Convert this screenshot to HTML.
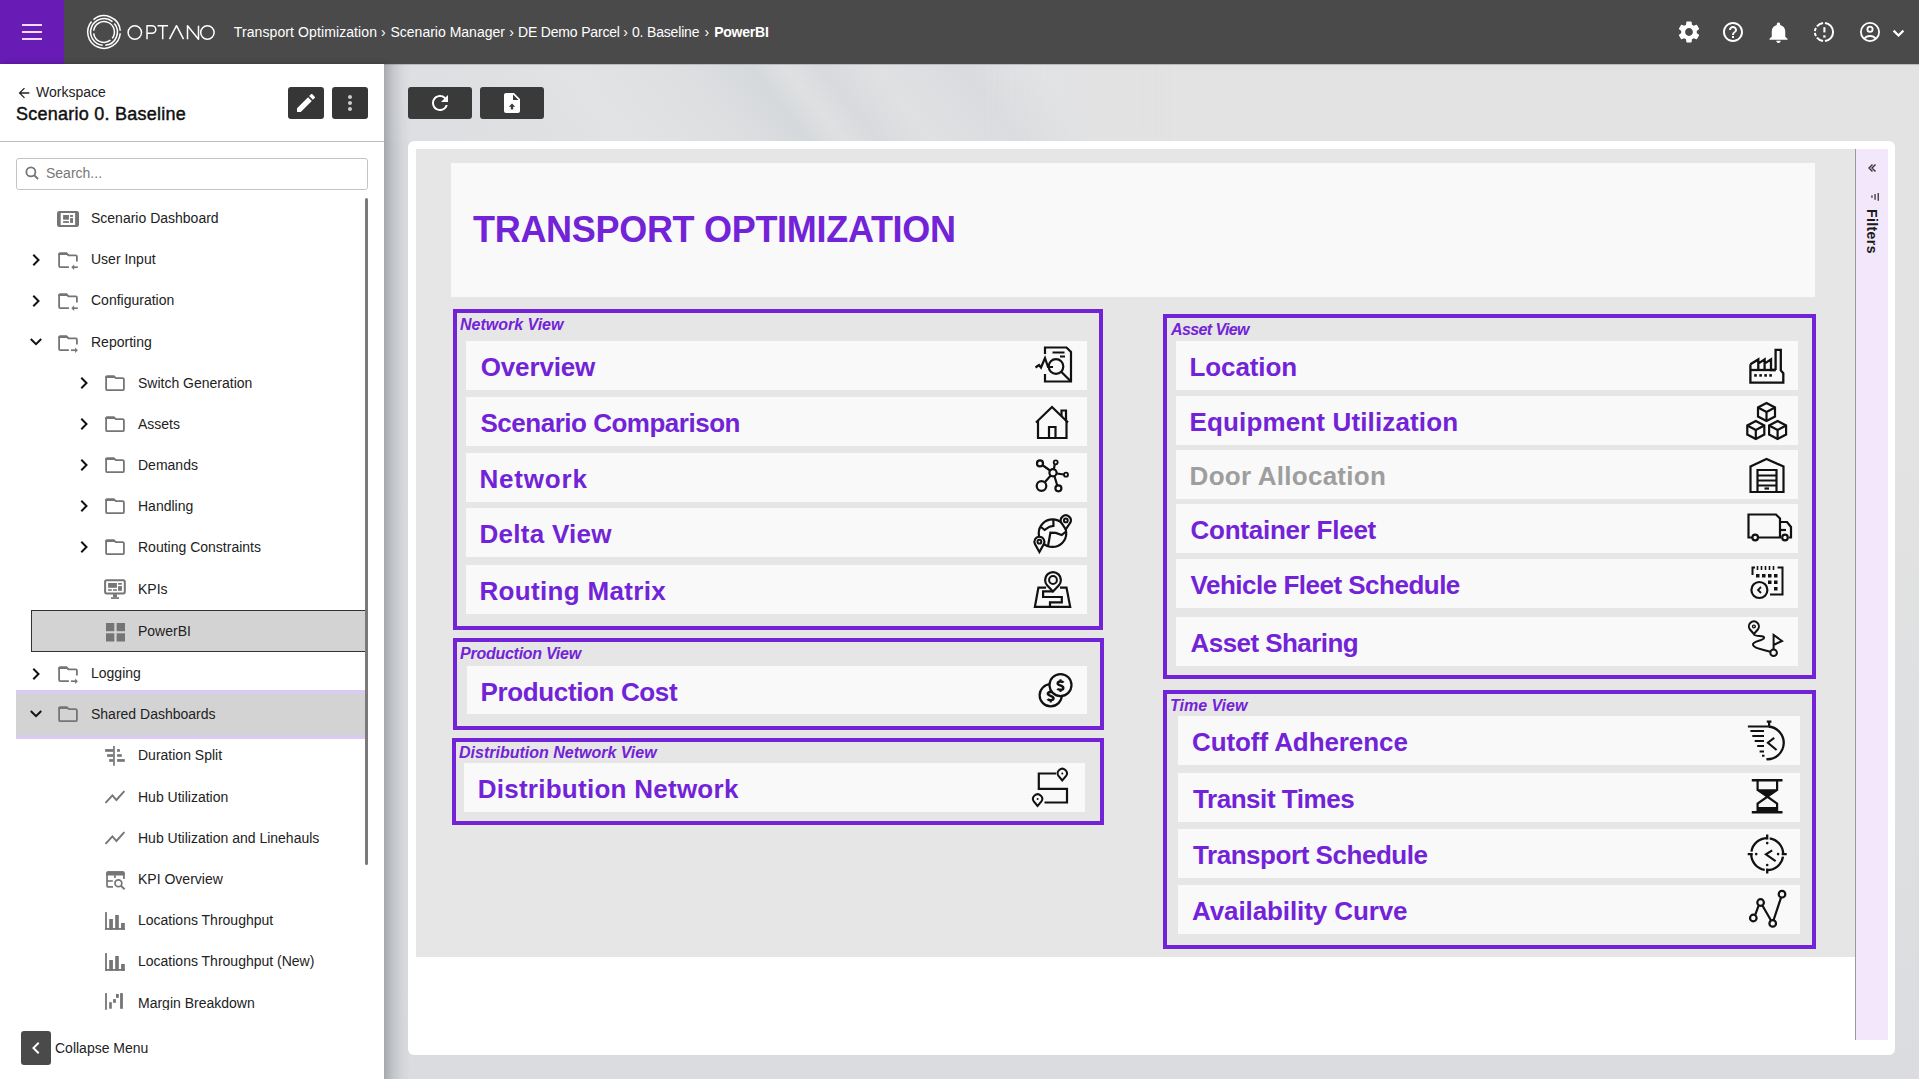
<!DOCTYPE html><html><head><meta charset="utf-8"><style>
*{margin:0;padding:0;box-sizing:border-box}
html,body{width:1919px;height:1079px;overflow:hidden;font-family:"Liberation Sans",sans-serif;background:#dfe0e2}
.abs{position:absolute}
.top{left:0;top:0;width:1919px;height:64px;background:#4a4a4a}
.ham{left:0;top:0;width:64px;height:64px;background:#691bb5}
.ham i{position:absolute;left:22px;width:20px;height:2px;background:#f3dcff}
.bc{left:233px;top:23px;color:#fff;font-size:14px;line-height:18px;white-space:nowrap;letter-spacing:0px}
.bc b{font-weight:bold}
.bc .sep{padding:0 4px}
.side{left:0;top:64px;width:384px;height:1015px;background:#fff;box-shadow:2px 0 6px rgba(0,0,0,.25)}
.tx{position:absolute;font-size:14px;line-height:16px;color:#222;white-space:nowrap}
.btnd{position:absolute;background:#363636;border-radius:3px}
.main{left:384px;top:64px;width:1535px;height:1015px;overflow:hidden;
 background:linear-gradient(to bottom,rgba(218,220,223,0) 0,rgba(218,220,223,0) 35%,#dadcdf 100%),linear-gradient(to right,#dadcdf 0,#e0e1e3 600px,#e3e3e3 800px)}
.streak{left:384px;top:64px;width:790px;height:77px;
 background:linear-gradient(52deg,rgba(220,222,225,1) 0px,#e0e1e3 150px,#e2e3e5 190px,#dfe0e2 260px,#d6d9dc 335px,#dfe0e2 362px,#d8dadd 390px,#e0e1e3 432px,#d9dbde 501px,#e2e3e4 560px,#e3e3e3 650px);-webkit-mask-image:linear-gradient(to right,#000 0,#000 600px,transparent 790px)}
.card{left:408px;top:141px;width:1487px;height:914px;background:#fff;border-radius:6px}
.canvas{left:416px;top:149px;width:1439px;height:808px;background:#e6e6e6}
.pane{left:1855px;top:149px;width:33px;height:891px;background:#f3e8fb;border-left:1px solid #9a9a9a}
.tbox{left:451px;top:163px;width:1364px;height:134px;background:#f9f9f9}
.title{left:473px;top:209px;font-size:36px;line-height:42px;font-weight:bold;color:#7323d7;white-space:nowrap;letter-spacing:-0.3px}
.grp{position:absolute;border:4px solid #7323d7}
.lbl{position:absolute;font-size:16px;line-height:18px;font-weight:bold;font-style:italic;color:#7323d7;white-space:nowrap}
.it{position:absolute;background:#f9f9f9}
.it span{position:absolute;font-size:26px;line-height:30px;font-weight:bold;color:#7323d7;white-space:nowrap}
.it svg{position:absolute}
</style></head><body>
<div class="abs top"></div>
<div class="abs ham"><i style="top:24px"></i><i style="top:31px"></i><i style="top:38px"></i></div>
<svg class="abs" style="left:84px;top:12px" width="40" height="40" viewBox="0 0 40 40" fill="none" stroke="#fff" stroke-width="1.5">
<path d="M36.25 18.70A16.3 16.3 0 0 0 9.43 7.59"/>
<path d="M7.59 9.43A16.3 16.3 0 1 0 36.25 21.30"/>
<path d="M28.51 9.65A13.4 13.4 0 1 0 18.70 33.34"/>
<path d="M21.30 33.34A13.4 13.4 0 0 0 30.35 11.49"/>
<path d="M9.68 21.30A10.4 10.4 0 0 0 26.38 28.21"/>
<path d="M28.21 26.38A10.4 10.4 0 1 0 9.68 18.70"/>
</svg>
<svg class="abs" style="left:127px;top:23px" width="90" height="18" viewBox="0 0 90 18" fill="none" stroke="#fff" stroke-width="1.5" stroke-linejoin="round">
<ellipse cx="7.8" cy="9.45" rx="6.7" ry="6.75"/>
<path d="M20 16.2V2.7H25A3.8 3.8 0 0 1 25 10.3H20"/>
<path d="M30.5 2.7H41M35.7 2.7V16.2"/>
<path d="M42.5 16.2L49.5 2.7L56.5 16.2"/>
<path d="M60.5 16.2V2.7L71.5 16.2V2.7"/>
<ellipse cx="80.4" cy="9.45" rx="6.7" ry="6.75"/>
</svg>
<div class="abs bc" style="left:233.8px;letter-spacing:0.1px">Transport Optimization</div>
<div class="abs bc" style="left:381px;letter-spacing:0px">›</div>
<div class="abs bc" style="left:390.5px;letter-spacing:0px">Scenario Manager</div>
<div class="abs bc" style="left:509.2px;letter-spacing:0px">›</div>
<div class="abs bc" style="left:518px;letter-spacing:-0.18px">DE Demo Parcel</div>
<div class="abs bc" style="left:623.3px;letter-spacing:0px">›</div>
<div class="abs bc" style="left:632px;letter-spacing:-0.18px">0. Baseline</div>
<div class="abs bc" style="left:704.6px;letter-spacing:0px">›</div>
<div class="abs bc" style="left:714.2px;letter-spacing:-0.23px"><b>PowerBI</b></div>
<svg class="abs" style="left:1676px;top:19px" width="26" height="26" viewBox="0 0 24 24" fill="#fff"><path d="M19.14 12.94c.04-.3.06-.61.06-.94 0-.32-.02-.64-.07-.94l2.03-1.58a.49.49 0 0 0 .12-.61l-1.92-3.32a.488.488 0 0 0-.59-.22l-2.39.96c-.5-.38-1.03-.7-1.62-.94l-.36-2.54a.484.484 0 0 0-.48-.41h-3.84c-.24 0-.43.17-.47.41l-.36 2.54c-.59.24-1.13.57-1.62.94l-2.39-.96c-.22-.08-.47 0-.59.22L2.74 8.87c-.12.21-.08.47.12.61l2.03 1.58c-.05.3-.09.63-.09.94s.02.64.07.94l-2.03 1.58a.49.49 0 0 0-.12.61l1.92 3.32c.12.22.37.29.59.22l2.39-.96c.5.38 1.03.7 1.62.94l.36 2.54c.05.24.24.41.48.41h3.84c.24 0 .44-.17.47-.41l.36-2.54c.59-.24 1.13-.56 1.62-.94l2.39.96c.22.08.47 0 .59-.22l1.92-3.32c.12-.22.07-.47-.12-.61l-2.01-1.58zM12 15.6c-1.98 0-3.6-1.62-3.6-3.6s1.62-3.6 3.6-3.6 3.6 1.62 3.6 3.6-1.62 3.6-3.6 3.6z"/></svg>
<svg class="abs" style="left:1721px;top:20px" width="24" height="24" viewBox="0 0 24 24" fill="#fff"><path d="M11 18h2v-2h-2v2zm1-16C6.48 2 2 6.48 2 12s4.48 10 10 10 10-4.48 10-10S17.52 2 12 2zm0 18c-4.41 0-8-3.59-8-8s3.59-8 8-8 8 3.59 8 8-3.59 8-8 8zm0-14c-2.21 0-4 1.79-4 4h2c0-1.1.9-2 2-2s2 .9 2 2c0 2-3 1.75-3 5h2c0-2.25 3-2.5 3-5 0-2.21-1.79-4-4-4z"/></svg>
<svg class="abs" style="left:1764.5px;top:19.5px" width="27" height="25" viewBox="0 0 24 24" preserveAspectRatio="none" fill="#fff"><path d="M12 22c1.1 0 2-.9 2-2h-4c0 1.1.89 2 2 2zm6-6v-5c0-3.07-1.64-5.64-4.5-6.32V4c0-.83-.67-1.5-1.5-1.5s-1.5.67-1.5 1.5v.68C7.63 5.36 6 7.92 6 11v5l-2 2v1h16v-1l-2-2z"/></svg>
<svg class="abs" style="left:1812px;top:20px" width="24" height="24" viewBox="0 0 24 24" fill="none" stroke="#fff" stroke-width="2"><path d="M12.95 21.05A9.1 9.1 0 0 0 12.95 2.95 M11.05 2.95A9.1 9.1 0 0 0 4.93 6.27 M3.89 7.87A9.1 9.1 0 0 0 2.95 11.05 M2.95 12.95A9.1 9.1 0 0 0 3.89 16.13 M4.93 17.73A9.1 9.1 0 0 0 11.05 21.05"/><path d="M12.4 7.2V12.4" stroke-width="2.1"/><rect x="11.25" y="15.3" width="2.3" height="2.3" fill="#fff" stroke="none"/></svg>
<svg class="abs" style="left:1858px;top:20px" width="24" height="24" viewBox="0 0 24 24" fill="none" stroke="#fff" stroke-width="1.8"><circle cx="12" cy="12" r="9.1"/><circle cx="12" cy="9.3" r="2.6"/><path d="M6.3 18.6c1.2-1.6 3.3-2.6 5.7-2.6s4.5 1 5.7 2.6"/></svg>
<svg class="abs" style="left:1891px;top:27px" width="14" height="12" viewBox="0 0 14 12" fill="none" stroke="#fff" stroke-width="2.2"><path d="M2.6 3.6l4.9 4.9 4.9-4.9"/></svg>
<div class="abs side"></div>
<svg class="abs" style="left:16px;top:85px" width="16" height="16" viewBox="0 0 24 24" fill="#222"><path d="M20 11H7.83l5.59-5.59L12 4l-8 8 8 8 1.41-1.41L7.83 13H20v-2z"/></svg>
<div class="tx" style="left:36px;top:84px;font-size:14px">Workspace</div>
<div class="tx" style="left:16px;top:104px;font-size:18px;line-height:20px;font-weight:normal;color:#111;letter-spacing:0.25px;-webkit-text-stroke:0.45px #111">Scenario 0. Baseline</div>
<div class="btnd" style="left:288px;top:87px;width:36px;height:32px"></div>
<svg class="abs" style="left:294px;top:91px" width="24" height="24" viewBox="0 0 24 24" fill="#fff"><path d="M3 17.25V21h3.75L17.81 9.94l-3.75-3.75L3 17.25zM20.71 7.04a1 1 0 0 0 0-1.41l-2.34-2.34a1 1 0 0 0-1.41 0l-1.83 1.83 3.75 3.75 1.83-1.83z"/></svg>
<div class="btnd" style="left:332px;top:87px;width:36px;height:32px"></div>
<svg class="abs" style="left:338px;top:91px" width="24" height="24" viewBox="0 0 24 24" fill="#cdcdcd"><path d="M12 8c1.1 0 2-.9 2-2s-.9-2-2-2-2 .9-2 2 .9 2 2 2zm0 2c-1.1 0-2 .9-2 2s.9 2 2 2 2-.9 2-2-.9-2-2-2zm0 6c-1.1 0-2 .9-2 2s.9 2 2 2 2-.9 2-2-.9-2-2-2z"/></svg>
<div class="abs" style="left:0;top:141px;width:384px;height:1px;background:#bdbdbd"></div>
<div class="abs" style="left:16px;top:158px;width:352px;height:32px;border:1px solid #c4c4c4;border-radius:3px"></div>
<svg class="abs" style="left:23px;top:164px" width="18" height="18" viewBox="0 0 24 24" fill="none" stroke="#757575" stroke-width="2.4"><circle cx="10.5" cy="10.5" r="6"/><path d="M15 15l5 5"/></svg>
<div class="tx" style="left:46px;top:165px;color:#777">Search...</div>
<div class="abs" style="left:31px;top:610px;width:337px;height:42px;background:#d3d3d3;border:1px solid #333"></div>
<div class="abs" style="left:16px;top:690px;width:352px;height:49px;background:#d3d3d3;border-top:4px solid #dccbf0;border-bottom:4px solid #dccbf0"></div>
<div class="abs" style="left:0;top:198px;width:384px;height:812px;overflow:hidden">
<div class="abs" style="left:57px;top:13px;line-height:0"><svg width="22" height="16" viewBox="0 0 22 16"><rect x="0" y="0" width="22" height="16" rx="2.2" fill="#757575"/><rect x="3.7" y="2" width="14.4" height="12" fill="#fff"/><rect x="6.1" y="4" width="5.8" height="4.7" fill="#757575"/><rect x="6.1" y="10.1" width="5.8" height="1.8" fill="#757575"/><rect x="13.1" y="4" width="2.9" height="1.9" fill="#757575"/><rect x="13.1" y="7.1" width="2.9" height="4.8" fill="#757575"/></svg></div>
<div class="tx" style="left:91px;top:12px">Scenario Dashboard</div>
<div class="abs" style="left:31px;top:55px;line-height:0"><svg width="10" height="14" viewBox="0 0 10 14" fill="none" stroke="#111" stroke-width="2"><path d="M2.3 1.8L7.5 7L2.3 12.2"/></svg></div>
<div class="abs" style="left:57px;top:53px;line-height:0"><svg width="23" height="20" viewBox="0 0 23 20"><path d="M11.9 16.2H3.2A1.1 1.1 0 0 1 2.1 15.1V3.6A1.1 1.1 0 0 1 3.2 2.5H9.6L11.4 4.3H18.8A1.1 1.1 0 0 1 19.9 5.4V10.6" fill="none" stroke="#757575" stroke-width="1.8"/><path d="M1.2 3.2A1.6 1.6 0 0 1 2.8 1.6H9.9L12.2 4H1.2Z" fill="#757575"/><path d="M16.3 16.2H20.8" stroke="#757575" stroke-width="1.7"/><path d="M14.3 16.2L17.1 13.5V18.9Z" fill="#757575"/></svg></div>
<div class="tx" style="left:91px;top:53px">User Input</div>
<div class="abs" style="left:31px;top:96px;line-height:0"><svg width="10" height="14" viewBox="0 0 10 14" fill="none" stroke="#111" stroke-width="2"><path d="M2.3 1.8L7.5 7L2.3 12.2"/></svg></div>
<div class="abs" style="left:57px;top:94px;line-height:0"><svg width="23" height="20" viewBox="0 0 23 20"><path d="M11.9 16.2H3.2A1.1 1.1 0 0 1 2.1 15.1V3.6A1.1 1.1 0 0 1 3.2 2.5H9.6L11.4 4.3H18.8A1.1 1.1 0 0 1 19.9 5.4V10.6" fill="none" stroke="#757575" stroke-width="1.8"/><path d="M1.2 3.2A1.6 1.6 0 0 1 2.8 1.6H9.9L12.2 4H1.2Z" fill="#757575"/><path d="M16.3 16.2H20.8" stroke="#757575" stroke-width="1.7"/><path d="M14.3 16.2L17.1 13.5V18.9Z" fill="#757575"/></svg></div>
<div class="tx" style="left:91px;top:94px">Configuration</div>
<div class="abs" style="left:29px;top:139px;line-height:0"><svg width="14" height="10" viewBox="0 0 14 10" fill="none" stroke="#111" stroke-width="2"><path d="M1.8 2L7 7.2L12.2 2"/></svg></div>
<div class="abs" style="left:57px;top:136px;line-height:0"><svg width="23" height="20" viewBox="0 0 23 20"><path d="M11.9 16.2H3.2A1.1 1.1 0 0 1 2.1 15.1V3.6A1.1 1.1 0 0 1 3.2 2.5H9.6L11.4 4.3H18.8A1.1 1.1 0 0 1 19.9 5.4V10.6" fill="none" stroke="#757575" stroke-width="1.8"/><path d="M1.2 3.2A1.6 1.6 0 0 1 2.8 1.6H9.9L12.2 4H1.2Z" fill="#757575"/><path d="M13.9 16.2H18.5" stroke="#757575" stroke-width="1.7"/><path d="M20.9 16.2L18.1 13.5V18.9Z" fill="#757575"/></svg></div>
<div class="tx" style="left:91px;top:136px">Reporting</div>
<div class="abs" style="left:78.5px;top:178px;line-height:0"><svg width="10" height="14" viewBox="0 0 10 14" fill="none" stroke="#111" stroke-width="2"><path d="M2.3 1.8L7.5 7L2.3 12.2"/></svg></div>
<div class="abs" style="left:104px;top:176px;line-height:0"><svg width="22" height="20" viewBox="0 0 22 20"><path d="M2.1 3.4A1.1 1.1 0 0 1 3.2 2.3H9.9L11.8 4.1H18.6A1.3 1.3 0 0 1 19.9 5.4V14.9A1.3 1.3 0 0 1 18.6 16.2H3.4A1.3 1.3 0 0 1 2.1 14.9Z" fill="none" stroke="#757575" stroke-width="1.8"/><path d="M1.2 3A1.6 1.6 0 0 1 2.8 1.4H10.1L12.6 4H1.2Z" fill="#757575"/></svg></div>
<div class="tx" style="left:138px;top:177px">Switch Generation</div>
<div class="abs" style="left:78.5px;top:219px;line-height:0"><svg width="10" height="14" viewBox="0 0 10 14" fill="none" stroke="#111" stroke-width="2"><path d="M2.3 1.8L7.5 7L2.3 12.2"/></svg></div>
<div class="abs" style="left:104px;top:217px;line-height:0"><svg width="22" height="20" viewBox="0 0 22 20"><path d="M2.1 3.4A1.1 1.1 0 0 1 3.2 2.3H9.9L11.8 4.1H18.6A1.3 1.3 0 0 1 19.9 5.4V14.9A1.3 1.3 0 0 1 18.6 16.2H3.4A1.3 1.3 0 0 1 2.1 14.9Z" fill="none" stroke="#757575" stroke-width="1.8"/><path d="M1.2 3A1.6 1.6 0 0 1 2.8 1.4H10.1L12.6 4H1.2Z" fill="#757575"/></svg></div>
<div class="tx" style="left:138px;top:218px">Assets</div>
<div class="abs" style="left:78.5px;top:260px;line-height:0"><svg width="10" height="14" viewBox="0 0 10 14" fill="none" stroke="#111" stroke-width="2"><path d="M2.3 1.8L7.5 7L2.3 12.2"/></svg></div>
<div class="abs" style="left:104px;top:258px;line-height:0"><svg width="22" height="20" viewBox="0 0 22 20"><path d="M2.1 3.4A1.1 1.1 0 0 1 3.2 2.3H9.9L11.8 4.1H18.6A1.3 1.3 0 0 1 19.9 5.4V14.9A1.3 1.3 0 0 1 18.6 16.2H3.4A1.3 1.3 0 0 1 2.1 14.9Z" fill="none" stroke="#757575" stroke-width="1.8"/><path d="M1.2 3A1.6 1.6 0 0 1 2.8 1.4H10.1L12.6 4H1.2Z" fill="#757575"/></svg></div>
<div class="tx" style="left:138px;top:259px">Demands</div>
<div class="abs" style="left:78.5px;top:301px;line-height:0"><svg width="10" height="14" viewBox="0 0 10 14" fill="none" stroke="#111" stroke-width="2"><path d="M2.3 1.8L7.5 7L2.3 12.2"/></svg></div>
<div class="abs" style="left:104px;top:299px;line-height:0"><svg width="22" height="20" viewBox="0 0 22 20"><path d="M2.1 3.4A1.1 1.1 0 0 1 3.2 2.3H9.9L11.8 4.1H18.6A1.3 1.3 0 0 1 19.9 5.4V14.9A1.3 1.3 0 0 1 18.6 16.2H3.4A1.3 1.3 0 0 1 2.1 14.9Z" fill="none" stroke="#757575" stroke-width="1.8"/><path d="M1.2 3A1.6 1.6 0 0 1 2.8 1.4H10.1L12.6 4H1.2Z" fill="#757575"/></svg></div>
<div class="tx" style="left:138px;top:300px">Handling</div>
<div class="abs" style="left:78.5px;top:342px;line-height:0"><svg width="10" height="14" viewBox="0 0 10 14" fill="none" stroke="#111" stroke-width="2"><path d="M2.3 1.8L7.5 7L2.3 12.2"/></svg></div>
<div class="abs" style="left:104px;top:340px;line-height:0"><svg width="22" height="20" viewBox="0 0 22 20"><path d="M2.1 3.4A1.1 1.1 0 0 1 3.2 2.3H9.9L11.8 4.1H18.6A1.3 1.3 0 0 1 19.9 5.4V14.9A1.3 1.3 0 0 1 18.6 16.2H3.4A1.3 1.3 0 0 1 2.1 14.9Z" fill="none" stroke="#757575" stroke-width="1.8"/><path d="M1.2 3A1.6 1.6 0 0 1 2.8 1.4H10.1L12.6 4H1.2Z" fill="#757575"/></svg></div>
<div class="tx" style="left:138px;top:341px">Routing Constraints</div>
<div class="abs" style="left:102px;top:379px;line-height:0"><svg width="26" height="24" viewBox="0 0 26 24" fill="#757575"><rect x="3.1" y="3.2" width="19.7" height="13.2" rx="1.6" fill="none" stroke="#757575" stroke-width="2"/><rect x="6.1" y="6" width="8.8" height="4.8"/><rect x="6.1" y="12.2" width="3.65" height="1.6"/><rect x="11.1" y="12.2" width="3.8" height="1.6"/><rect x="16.1" y="6" width="3.8" height="1.7"/><rect x="16.1" y="9.1" width="3.8" height="4.7"/><rect x="11.1" y="17.2" width="3.8" height="3"/><rect x="9" y="20.2" width="8" height="1.7"/></svg></div>
<div class="tx" style="left:138px;top:383px">KPIs</div>
<div class="abs" style="left:106px;top:424.5px;line-height:0"><svg width="20" height="20" viewBox="0 0 20 20" fill="#757575"><rect x="0" y="0" width="8.3" height="8.2"/><rect x="10.6" y="0" width="8.4" height="8.2"/><rect x="0" y="10.3" width="8.3" height="8.2"/><rect x="10.6" y="10.3" width="8.4" height="8.2"/></svg></div>
<div class="tx" style="left:138px;top:425px">PowerBI</div>
<div class="abs" style="left:31px;top:469px;line-height:0"><svg width="10" height="14" viewBox="0 0 10 14" fill="none" stroke="#111" stroke-width="2"><path d="M2.3 1.8L7.5 7L2.3 12.2"/></svg></div>
<div class="abs" style="left:57px;top:467px;line-height:0"><svg width="23" height="20" viewBox="0 0 23 20"><path d="M11.9 16.2H3.2A1.1 1.1 0 0 1 2.1 15.1V3.6A1.1 1.1 0 0 1 3.2 2.5H9.6L11.4 4.3H18.8A1.1 1.1 0 0 1 19.9 5.4V10.6" fill="none" stroke="#757575" stroke-width="1.8"/><path d="M1.2 3.2A1.6 1.6 0 0 1 2.8 1.6H9.9L12.2 4H1.2Z" fill="#757575"/><path d="M13.9 16.2H18.5" stroke="#757575" stroke-width="1.7"/><path d="M20.9 16.2L18.1 13.5V18.9Z" fill="#757575"/></svg></div>
<div class="tx" style="left:91px;top:467px">Logging</div>
<div class="abs" style="left:29px;top:511px;line-height:0"><svg width="14" height="10" viewBox="0 0 14 10" fill="none" stroke="#111" stroke-width="2"><path d="M1.8 2L7 7.2L12.2 2"/></svg></div>
<div class="abs" style="left:57px;top:507px;line-height:0"><svg width="22" height="20" viewBox="0 0 22 20"><path d="M2.1 3.4A1.1 1.1 0 0 1 3.2 2.3H9.9L11.8 4.1H18.6A1.3 1.3 0 0 1 19.9 5.4V14.9A1.3 1.3 0 0 1 18.6 16.2H3.4A1.3 1.3 0 0 1 2.1 14.9Z" fill="none" stroke="#757575" stroke-width="1.8"/><path d="M1.2 3A1.6 1.6 0 0 1 2.8 1.4H10.1L12.6 4H1.2Z" fill="#757575"/></svg></div>
<div class="tx" style="left:91px;top:508px">Shared Dashboards</div>
<div class="abs" style="left:104px;top:546px;line-height:0"><svg width="22" height="22" viewBox="0 0 22 22" fill="#757575"><rect x="9.1" y="2" width="1.7" height="19.7"/><rect x="1.1" y="5.1" width="8" height="2.7"/><rect x="3.1" y="10.2" width="6" height="2.6"/><rect x="5.2" y="15.1" width="3.9" height="2.7"/><rect x="13.1" y="5.1" width="2.8" height="2.7"/><rect x="13.1" y="10.2" width="4.7" height="2.6"/><rect x="13.1" y="15.1" width="7.7" height="2.7"/></svg></div>
<div class="tx" style="left:138px;top:549px">Duration Split</div>
<div class="abs" style="left:104px;top:592px;line-height:0"><svg width="22" height="14" viewBox="0 0 22 14" fill="none" stroke="#757575" stroke-width="1.9" stroke-linecap="round" stroke-linejoin="miter"><path d="M2 12.3L8.4 5.4L12.4 10L19.9 1.6"/></svg></div>
<div class="tx" style="left:138px;top:591px">Hub Utilization</div>
<div class="abs" style="left:104px;top:633px;line-height:0"><svg width="22" height="14" viewBox="0 0 22 14" fill="none" stroke="#757575" stroke-width="1.9" stroke-linecap="round" stroke-linejoin="miter"><path d="M2 12.3L8.4 5.4L12.4 10L19.9 1.6"/></svg></div>
<div class="tx" style="left:138px;top:632px">Hub Utilization and Linehauls</div>
<div class="abs" style="left:104px;top:670px;line-height:0"><svg width="22" height="22" viewBox="0 0 22 22" fill="none" stroke="#757575" stroke-width="1.7"><path d="M9 18.9H4.2A1.2 1.2 0 0 1 3 17.7V5.4A1.3 1.3 0 0 1 4.3 4.1H18.6A1.3 1.3 0 0 1 19.9 5.4V11"/><path d="M2.2 5.2A1.9 1.9 0 0 1 4.1 3.2H18.8A1.9 1.9 0 0 1 20.7 5.2V7.6H2.2Z" fill="#757575" stroke="none"/><path d="M3 13H8.8" stroke-width="1.6"/><rect x="10" y="7.4" width="1.9" height="2.4" fill="#757575" stroke="none"/><circle cx="14.4" cy="15.3" r="3.4"/><path d="M16.9 17.8L20.6 21.2" stroke-width="1.9"/></svg></div>
<div class="tx" style="left:138px;top:673px">KPI Overview</div>
<div class="abs" style="left:104px;top:712px;line-height:0"><svg width="22" height="20" viewBox="0 0 22 20" fill="#757575"><rect x="1.1" y="2.1" width="1.8" height="17.7"/><rect x="1.1" y="18" width="19.7" height="1.8"/><rect x="5.2" y="9" width="3.7" height="10.8"/><rect x="11.2" y="5" width="3.6" height="14.8"/><rect x="17.1" y="13" width="3.7" height="6.8"/></svg></div>
<div class="tx" style="left:138px;top:714px">Locations Throughput</div>
<div class="abs" style="left:104px;top:753px;line-height:0"><svg width="22" height="20" viewBox="0 0 22 20" fill="#757575"><rect x="1.1" y="2.1" width="1.8" height="17.7"/><rect x="1.1" y="18" width="19.7" height="1.8"/><rect x="5.2" y="9" width="3.7" height="10.8"/><rect x="11.2" y="5" width="3.6" height="14.8"/><rect x="17.1" y="13" width="3.7" height="6.8"/></svg></div>
<div class="tx" style="left:138px;top:755px">Locations Throughput (New)</div>
<div class="abs" style="left:104px;top:793px;line-height:0"><svg width="22" height="20" viewBox="0 0 22 20" fill="#757575"><rect x="1.1" y="2.1" width="1.8" height="16.7"/><rect x="5.2" y="11.2" width="2.6" height="6.5"/><rect x="9.1" y="8.1" width="2.8" height="3.7"/><rect x="12" y="3" width="2.8" height="3.9"/><rect x="16.1" y="2.1" width="2.8" height="15.7"/></svg></div>
<div class="tx" style="left:138px;top:797px">Margin Breakdown</div>
</div>
<div class="abs" style="left:365px;top:198px;width:3px;height:667px;background:#7a7a7a;border-radius:1.5px"></div>
<div class="btnd" style="left:21px;top:1031px;width:30px;height:34px;background:#4a4a4a;border-radius:3px"></div>
<svg class="abs" style="left:24px;top:1036px" width="24" height="24" viewBox="0 0 24 24" fill="#fff"><path d="M15.41 7.41L14 6l-6 6 6 6 1.41-1.41L10.83 12z"/></svg>
<div class="tx" style="left:55px;top:1040px">Collapse Menu</div>
<div class="abs main"></div>
<div class="abs streak"></div>
<div class="abs" style="left:384px;top:64px;width:1535px;height:1px;background:#b9bbc2"></div>
<div class="btnd" style="left:408px;top:87px;width:64px;height:32px;background:#3a3a3a"></div>
<svg class="abs" style="left:428px;top:91px" width="24" height="24" viewBox="0 0 24 24" fill="#fff"><path d="M17.65 6.35A7.958 7.958 0 0 0 12 4c-4.42 0-7.99 3.58-7.99 8s3.57 8 7.99 8c3.73 0 6.84-2.55 7.73-6h-2.08A5.99 5.99 0 0 1 12 18c-3.31 0-6-2.69-6-6s2.69-6 6-6c1.66 0 3.14.69 4.22 1.78L13 11h7V4l-2.35 2.35z"/></svg>
<div class="btnd" style="left:480px;top:87px;width:64px;height:32px;background:#3a3a3a"></div>
<svg class="abs" style="left:500px;top:91px" width="24" height="24" viewBox="0 0 24 24" fill="#fff"><path d="M14 2H6c-1.1 0-2 .9-2 2v16c0 1.1.9 2 2 2h12c1.1 0 2-.9 2-2V8l-6-6zm-2 10.6l3.2 3.2h-2v2.6h-2.4v-2.6h-2l3.2-3.2zM13 9V3.5L18.5 9H13z"/></svg>
<div class="abs" style="left:384px;top:64px;width:26px;height:1015px;background:linear-gradient(to right,rgba(70,74,82,.36) 0,rgba(70,74,82,.16) 9px,rgba(70,74,82,.05) 18px,rgba(70,74,82,0) 26px)"></div>
<div class="abs card"></div>
<div class="abs canvas"></div>
<div class="abs pane"></div>
<svg class="abs" style="left:1866px;top:162px" width="12" height="12" viewBox="0 0 12 12" fill="none" stroke="#333" stroke-width="1.4"><path d="M6.5 2.5L3 6l3.5 3.5M9.5 2.5L6 6l3.5 3.5"/></svg>
<svg class="abs" style="left:1866px;top:190px" width="16" height="14" viewBox="0 0 16 14" fill="#333"><rect x="11.6" y="3" width="1.3" height="7.8"/><rect x="8.4" y="4" width="1.3" height="5.8"/><rect x="5.3" y="5.4" width="1.3" height="2.4"/></svg>
<div class="abs" style="left:1864px;top:209px;width:16px;height:46px;writing-mode:vertical-rl;font-size:14px;line-height:16px;font-weight:bold;color:#1a1a1a;letter-spacing:0.4px">Filters</div>
<div class="abs tbox"></div>
<div class="abs title">TRANSPORT OPTIMIZATION</div>
<div class="grp" style="left:453px;top:309px;width:650px;height:321px"></div>
<div class="lbl" style="left:460px;top:316px;letter-spacing:0px">Network View</div>
<div class="grp" style="left:453px;top:638px;width:651px;height:92px"></div>
<div class="lbl" style="left:460px;top:645px;letter-spacing:-0.26px">Production View</div>
<div class="grp" style="left:452px;top:738px;width:652px;height:87px"></div>
<div class="lbl" style="left:459px;top:744px;letter-spacing:0px">Distribution Network View</div>
<div class="grp" style="left:1163px;top:314px;width:653px;height:365px"></div>
<div class="lbl" style="left:1171px;top:321px;letter-spacing:-0.6px">Asset View</div>
<div class="grp" style="left:1163px;top:690px;width:653px;height:259px"></div>
<div class="lbl" style="left:1170px;top:697px;letter-spacing:0px">Time View</div>
<div class="it" style="left:466px;top:341px;width:621px;height:49px"></div>
<div class="abs" style="left:480.7px;top:352px;font-size:26px;line-height:30px;font-weight:bold;color:#7323d7;white-space:nowrap;letter-spacing:-0.143px">Overview</div>
<div class="it" style="left:466px;top:397px;width:621px;height:49px"></div>
<div class="abs" style="left:480.5px;top:408px;font-size:26px;line-height:30px;font-weight:bold;color:#7323d7;white-space:nowrap;letter-spacing:-0.489px">Scenario Comparison</div>
<div class="it" style="left:466px;top:453px;width:621px;height:49px"></div>
<div class="abs" style="left:479.5px;top:464px;font-size:26px;line-height:30px;font-weight:bold;color:#7323d7;white-space:nowrap;letter-spacing:0.800px">Network</div>
<div class="it" style="left:466px;top:508px;width:621px;height:49px"></div>
<div class="abs" style="left:479.5px;top:519px;font-size:26px;line-height:30px;font-weight:bold;color:#7323d7;white-space:nowrap;letter-spacing:0.267px">Delta View</div>
<div class="it" style="left:466px;top:565px;width:621px;height:49px"></div>
<div class="abs" style="left:479.5px;top:576px;font-size:26px;line-height:30px;font-weight:bold;color:#7323d7;white-space:nowrap;letter-spacing:0.323px">Routing Matrix</div>
<div class="it" style="left:467px;top:666px;width:620px;height:48px"></div>
<div class="abs" style="left:480.5px;top:677px;font-size:26px;line-height:30px;font-weight:bold;color:#7323d7;white-space:nowrap;letter-spacing:-0.364px">Production Cost</div>
<div class="it" style="left:464px;top:763px;width:621px;height:49px"></div>
<div class="abs" style="left:477.7px;top:774px;font-size:26px;line-height:30px;font-weight:bold;color:#7323d7;white-space:nowrap;letter-spacing:0.263px">Distribution Network</div>
<div class="it" style="left:1176px;top:341px;width:622px;height:49px"></div>
<div class="abs" style="left:1189.6px;top:352px;font-size:26px;line-height:30px;font-weight:bold;color:#7323d7;white-space:nowrap;letter-spacing:-0.129px">Location</div>
<div class="it" style="left:1176px;top:396px;width:622px;height:49px"></div>
<div class="abs" style="left:1189.6px;top:407px;font-size:26px;line-height:30px;font-weight:bold;color:#7323d7;white-space:nowrap;letter-spacing:0.135px">Equipment Utilization</div>
<div class="it" style="left:1176px;top:450px;width:622px;height:49px"></div>
<div class="abs" style="left:1189.6px;top:461px;font-size:26px;line-height:30px;font-weight:bold;color:#7323d7;color:#9e9e9e;white-space:nowrap;letter-spacing:0.257px">Door Allocation</div>
<div class="it" style="left:1176px;top:504px;width:622px;height:49px"></div>
<div class="abs" style="left:1190.6px;top:515px;font-size:26px;line-height:30px;font-weight:bold;color:#7323d7;white-space:nowrap;letter-spacing:-0.257px">Container Fleet</div>
<div class="it" style="left:1176px;top:559px;width:622px;height:49px"></div>
<div class="abs" style="left:1190.6px;top:570px;font-size:26px;line-height:30px;font-weight:bold;color:#7323d7;white-space:nowrap;letter-spacing:-0.505px">Vehicle Fleet Schedule</div>
<div class="it" style="left:1176px;top:617px;width:622px;height:49px"></div>
<div class="abs" style="left:1190.6px;top:628px;font-size:26px;line-height:30px;font-weight:bold;color:#7323d7;white-space:nowrap;letter-spacing:-0.567px">Asset Sharing</div>
<div class="it" style="left:1178px;top:716px;width:622px;height:49px"></div>
<div class="abs" style="left:1192.0px;top:727px;font-size:26px;line-height:30px;font-weight:bold;color:#7323d7;white-space:nowrap;letter-spacing:-0.087px">Cutoff Adherence</div>
<div class="it" style="left:1178px;top:773px;width:622px;height:49px"></div>
<div class="abs" style="left:1193.0px;top:784px;font-size:26px;line-height:30px;font-weight:bold;color:#7323d7;white-space:nowrap;letter-spacing:-0.450px">Transit Times</div>
<div class="it" style="left:1178px;top:829px;width:622px;height:49px"></div>
<div class="abs" style="left:1193.0px;top:840px;font-size:26px;line-height:30px;font-weight:bold;color:#7323d7;white-space:nowrap;letter-spacing:-0.453px">Transport Schedule</div>
<div class="it" style="left:1178px;top:885px;width:622px;height:49px"></div>
<div class="abs" style="left:1192.0px;top:896px;font-size:26px;line-height:30px;font-weight:bold;color:#7323d7;white-space:nowrap;letter-spacing:-0.100px">Availability Curve</div>
<svg class="abs" style="left:1000px;top:330px" width="820" height="620" viewBox="1000 330 820 620" fill="none" stroke="#111" stroke-width="2.2" stroke-linejoin="miter">
<!-- Overview -->
<path d="M1045 354V347.5H1066.5L1071 352V381.5H1045V374"/>
<path d="M1052.5 352.5H1064.5M1060 356.5H1065"/>
<circle cx="1056" cy="366.5" r="7.3"/>
<path d="M1061.5 372L1070.5 381"/>
<path d="M1035.5 367.5L1039 365L1041 367.5L1045 358L1048 367L1053 367"/>
<!-- House -->
<path d="M1036 422.5L1052 407L1068 422.5"/>
<path d="M1038 420.5V438H1066.5V420.5"/>
<path d="M1049 438V427H1055.5V438"/>
<path d="M1061.5 416V410.5H1066V421"/>
<!-- Network -->
<circle cx="1053" cy="472.8" r="3.6"/>
<circle cx="1040" cy="463.4" r="3"/>
<circle cx="1055.7" cy="462.3" r="2" stroke-width="1.8"/>
<circle cx="1066" cy="474.7" r="2" stroke-width="1.8"/>
<circle cx="1041.5" cy="486" r="4.8"/>
<circle cx="1058.4" cy="488.3" r="3"/>
<path d="M1043 465.5L1050 470.5M1054.8 464.3L1053.8 469.3M1056.6 473.5L1064 474.5M1050.5 475.8L1045 482M1054.5 476.3L1057.2 485.3"/>
<!-- Delta view globe -->
<circle cx="1052.5" cy="533.2" r="13.75"/>
<path d="M1041 527L1044.6 530L1049.6 526.7L1053.5 525.8L1053.3 519.5"/>
<path d="M1047.9 546.8L1050.4 532.7L1055.8 532.9L1061.7 535L1066 531.5"/>
<path d="M1065.8 529.4L1061.64 523.18A5 5 0 1 1 1069.96 523.18Z" fill="#f9f9f9" stroke-width="2.1"/>
<circle cx="1065.8" cy="520.4" r="1.9" stroke-width="2"/>
<path d="M1039.4 552L1035.03 544.13A5 5 0 1 1 1043.77 544.13Z" fill="#f9f9f9" stroke-width="2.1"/>
<circle cx="1039.4" cy="541.7" r="1.9" stroke-width="2"/>
<!-- Routing matrix -->
<path d="M1046.1 587.6H1038.4L1034.9 606.8H1070.2L1066.5 587.6H1060"/>
<path d="M1053 591.3H1043.1V597H1061.8V602.3H1050V606.8"/>
<path d="M1053 591.5L1047.26 585.43A7.9 7.9 0 1 1 1058.74 585.43Z" fill="#f9f9f9" stroke-width="2.2"/>
<circle cx="1053" cy="580" r="3.9" stroke-width="2"/>
<!-- Production cost coins -->
<circle cx="1050.7" cy="695.3" r="11.1" stroke-width="2.2"/>
<path d="M1053.6 693.0C1052.7 691.4 1047.9 691.4 1047.9 693.8C1047.9 696.0 1053.5 695.7 1053.5 698.3C1053.5 700.7 1048.7 700.7 1047.7 699.0" stroke-width="2.5"/><path d="M1050.7 689.6V692.4M1050.7 699.6V702.4" stroke-width="2"/>
<circle cx="1060.5" cy="685.1" r="11" fill="#f9f9f9" stroke-width="2.2"/>
<path d="M1063.4 682.6C1062.5 681.0 1057.7 681.0 1057.7 683.4C1057.7 685.6 1063.3 685.3 1063.3 687.9C1063.3 690.3 1058.5 690.3 1057.5 688.6" stroke-width="2.5"/><path d="M1060.5 679.2V682.0M1060.5 689.2V692.0" stroke-width="2"/>
<!-- Distribution network -->
<path d="M1056 773.5H1038.8V788.8H1067V802.5H1044.5"/>
<path d="M1062.3 780.5L1058.5 776A4.6 4.6 0 1 1 1066.1 776Z" fill="#f9f9f9" stroke-width="2"/>
<circle cx="1062.3" cy="773.5" r="1" fill="#111" stroke="none"/>
<path d="M1037.6 806L1033.8 801.5A4.6 4.6 0 1 1 1041.4 801.5Z" fill="#f9f9f9" stroke-width="2"/>
<circle cx="1037.6" cy="799" r="1" fill="#111" stroke="none"/>
<!-- Factory -->
<path d="M1750.4 364.2V382.7H1783.3V373.3L1780.8 370.4V349.8H1775.6V370" stroke-width="2.3"/>
<path d="M1750.4 364.2L1758.3 359.4V370M1758.3 363.6L1764.6 359.4V370M1764.6 363.6L1771 359.4V370H1775.6" stroke-width="2.3"/>
<path d="M1750.4 370H1775.6" stroke-width="2.3"/>
<g fill="#111" stroke="none"><rect x="1754.2" y="374.1" width="2.6" height="2.6"/><rect x="1759.3" y="374.1" width="2.6" height="2.6"/><rect x="1764.3" y="374.1" width="2.6" height="2.6"/><rect x="1769.3" y="374.1" width="2.6" height="2.6"/></g>
<!-- cubes -->
<g stroke-width="2.2">
<path d="M1766.5 403L1775 407.5V416.5L1766.5 421L1758 416.5V407.5Z"/>
<path d="M1758 407.5L1766.5 412L1775 407.5M1766.5 412V421"/>
<path d="M1755.8 421L1764.3 425.5V434.5L1755.8 439L1747.3 434.5V425.5Z"/>
<path d="M1747.3 425.5L1755.8 430L1764.3 425.5M1755.8 430V439"/>
<path d="M1777.6 421L1786.1 425.5V434.5L1777.6 439L1769.1 434.5V425.5Z"/>
<path d="M1769.1 425.5L1777.6 430L1786.1 425.5M1777.6 430V439"/>
</g>
<!-- garage -->
<path d="M1750.5 492V466.5L1766.5 459L1783.5 466.5V492Z"/>
<path d="M1757.5 492V470H1776.5V492M1757.5 475.5H1776.5M1757.5 480.5H1776.5M1757.5 485.5H1776.5"/>
<path d="M1764.5 488.5H1769"/>
<!-- truck -->
<path d="M1752 537.5H1748.5V514.5H1776L1780 518.5V537.5H1758.5M1780 522H1787L1791 527V537.5H1789M1780 537.5H1781"/>
<path d="M1780 530H1786"/>
<circle cx="1755.2" cy="537.5" r="2.8"/>
<circle cx="1785" cy="537.5" r="2.8"/>
<!-- calendar -->
<path d="M1752.5 575V567.5H1755M1777.5 567.5H1782.5V594.5H1770" stroke-width="2"/>
<path d="M1757.5 566V570M1761.5 566V570M1765.5 566V570M1769.5 566V570M1773.5 566V570" stroke-width="1.6"/>
<g fill="#111" stroke="none">
<rect x="1756" y="574" width="3.5" height="3.5"/><rect x="1762" y="574" width="3.5" height="3.5"/><rect x="1768" y="574" width="3.5" height="3.5"/><rect x="1774" y="574" width="3.5" height="3.5"/>
<rect x="1768" y="580.5" width="3.5" height="3.5"/><rect x="1774" y="580.5" width="3.5" height="3.5"/><rect x="1774" y="587" width="3.5" height="3.5"/>
</g>
<circle cx="1759.4" cy="590" r="8" fill="#f9f9f9"/>
<path d="M1761 587L1758 590L1761 593" stroke-width="1.8"/>
<!-- asset sharing -->
<path d="M1753.9 634L1750 629.5A5 5 0 1 1 1757.8 629.5Z" fill="#f9f9f9" stroke-width="2"/>
<circle cx="1753.9" cy="626.5" r="1.4" stroke-width="1.4"/>
<path d="M1754 634.5C1756 637 1765 635 1764 638C1763 641 1752 641 1753 645C1754 649 1766 650 1771 652" stroke-width="2"/>
<path d="M1773.6 649.5V635L1782 641L1773.6 645" stroke-width="2"/>
<circle cx="1773.6" cy="652.7" r="3.3" fill="#f9f9f9" stroke-width="2"/>
<!-- cutoff -->
<path d="M1768.3 726.5A16.3 16.3 0 0 1 1766.4 759.2" stroke-width="2.3"/>
<path d="M1747.9 726.5H1768.3M1769.1 726.5V722.5M1766.8 721.6H1771.4" stroke-width="2.2"/>
<path d="M1750.4 731H1764M1752.3 736H1764M1754.7 741H1764M1757.2 746.1H1764M1759.6 751.4H1764M1762 755.8H1764.5" stroke-width="2"/>
<path d="M1774.2 737.9L1767.9 742.7L1776.6 750" stroke-width="2.1"/>
<!-- hourglass -->
<path d="M1751.8 780.3H1782.5M1751.8 812.2H1782.5" stroke-width="2.6"/>
<path d="M1757.6 780.5V789.9L1767.4 796.7L1757.6 803.5V812M1777.1 780.5V789.9L1767.4 796.7L1777.1 803.5V812" stroke-width="2.2"/>
<path d="M1757.6 789.2H1777.1L1767.4 796.7Z" fill="#111" stroke="none"/>
<path d="M1757.6 807H1777.1V812H1757.6Z" fill="#111" stroke="none"/>
<!-- transport schedule -->
<path d="M1769.70 838.30A16 16 0 0 1 1783.20 854.10 M1783.00 856.60A16 16 0 0 1 1767.20 870.10 M1764.70 869.90A16 16 0 0 1 1751.20 854.10 M1751.40 851.60A16 16 0 0 1 1767.20 838.10" stroke-width="2.3"/>
<path d="M1767.20 839.60L1767.20 834.60 M1781.70 854.10L1786.70 854.10 M1767.20 868.60L1767.20 873.60 M1752.70 854.10L1747.70 854.10" stroke-width="2.3"/>
<path d="M1772.2 850.4L1765.9 854.3L1775.6 861.1" stroke-width="2.1"/>
<g fill="#111" stroke="none"><circle cx="1767.2" cy="843.1" r="1.3"/><circle cx="1756.2" cy="854.1" r="1.3"/><circle cx="1778.1" cy="854.1" r="1.3"/><circle cx="1767.2" cy="865" r="1.3"/></g>
<!-- availability -->
<path d="M1755.3 914.6L1758.6 905.6M1762.4 905.5L1770.9 920.2M1773.6 920L1781 897.6" stroke-width="2.2"/>
<circle cx="1753.3" cy="918" r="3.3" stroke-width="2.2"/>
<circle cx="1760.6" cy="902.5" r="3.3" stroke-width="2.2"/>
<circle cx="1772.7" cy="923.4" r="3.3" stroke-width="2.2"/>
<circle cx="1782" cy="894.2" r="3.3" stroke-width="2.2"/>
</svg>

</body></html>
